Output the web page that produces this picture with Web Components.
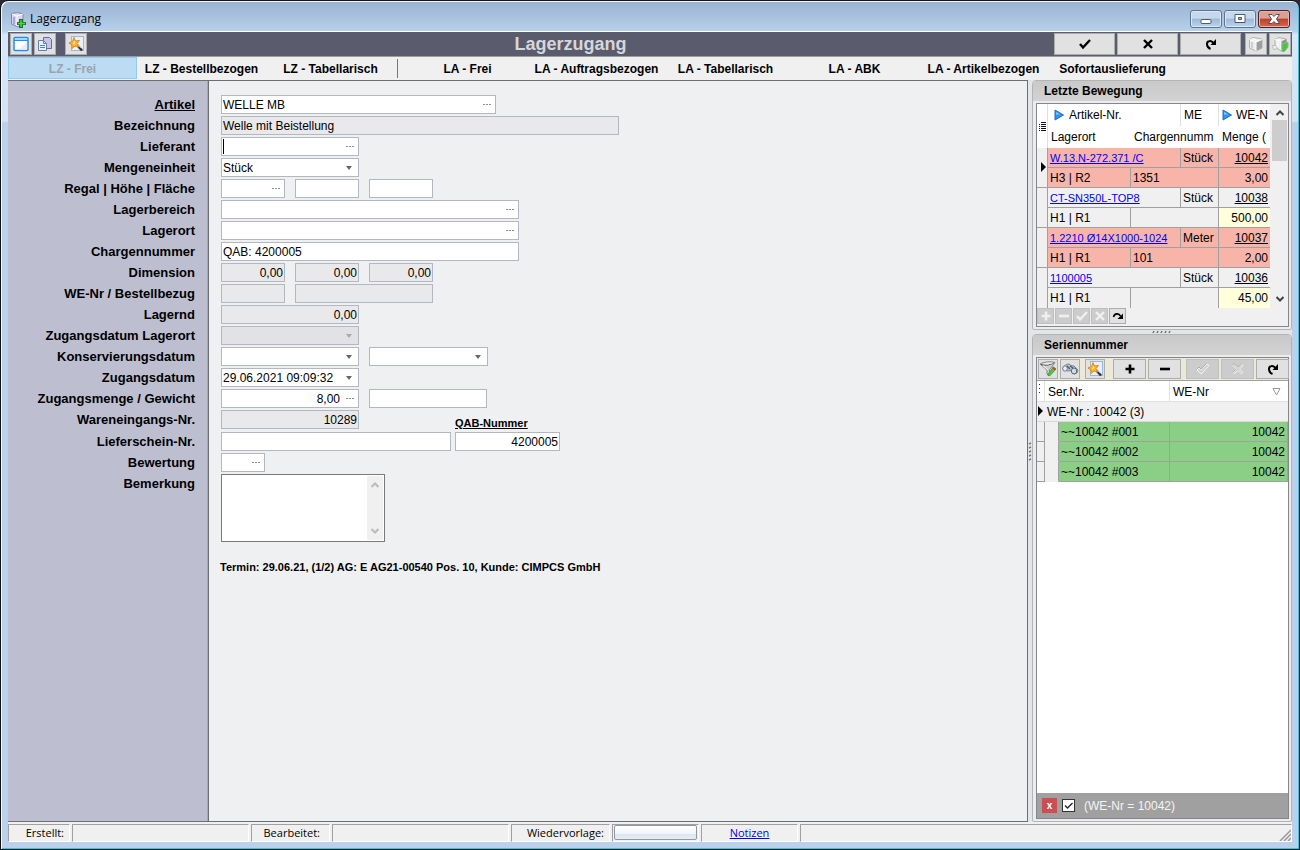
<!DOCTYPE html>
<html lang="de">
<head>
<meta charset="utf-8">
<title>Lagerzugang</title>
<style>
html, body { margin: 0; height: 100%; }
body { font: 12px/16px "Liberation Sans", Arial, sans-serif; color: #000; background: #2b2a30; }
</style>
</head>
<body>
<app-window caption="Lagerzugang">
  <tool-bar slot="top" caption="Lagerzugang"></tool-bar>
  <mode-tabs slot="top"></mode-tabs>
  <stock-form></stock-form>
  <side-column></side-column>
  <status-line slot="bottom"></status-line>
</app-window>
<script>
const ICONS = {
  box: [16, 17, '<path d="M1.500 2.500l6-1 5.500 1.500v10l-5 3-6.500-3z" fill="#d9d7f0" stroke="#8484b0"/><path d="M2 3l5 2v10M7 5l6-2" fill="none" stroke="#fff"/><path d="M4 6v7" stroke="#a9a5da" stroke-width="2"/><path d="M9 8h4v3h3v3h-3v3h-4v-3H7v-3h2z" fill="#167a1d"/><path d="M11 9v7M8 12.500h7" stroke="#4dd24d" stroke-width="1.500"/>'],
  window: [16, 16, '<rect x="1" y="1.500" width="14" height="13" rx="1" fill="#fff" stroke="#1e90f0" stroke-width="1.500"/><path d="M2 2h12v2H2z" fill="#9fd7ff"/><path d="M1 4.500h14" stroke="#1e90f0"/><path d="M6 13.500l8-8v8z" fill="#eceafb"/>'],
  pages: [16, 16, '<path d="M6.500 1.500h6l2 2v9h-8z" fill="#c9c4e8" stroke="#6e64a4"/><path d="M1.500 4.500h5l3 3v7h-8z" fill="#e6f1fb" stroke="#6382a8"/><path d="M6.500 4.500v3h3M3 9.500h5M3 11.500h5" fill="none" stroke="#6382a8"/>'],
  wand: [16, 16, '<rect x="3.500" y=".5" width="12" height="14" fill="#e8f0fc" stroke="#9db6dc"/><path d="M9 9l5 5.500" stroke="#333" stroke-width="2.500"/><path d="M10 9l3 3" stroke="#aaa"/><path d="M6 1.500L7.500 5l4-.5L9 7.500l1.500 3.500-3.500-1-3 2.500V9L1 7l3.500-1.500z" fill="#ffb52e" stroke="#e08a1c"/><path d="M6 5l.8 2L5 8" stroke="#fff2a8" fill="none"/>'],
  check: [14, 12, '<path d="M2 6l3 3.500L12 2" fill="none" stroke="currentColor" stroke-width="2.400"/>'],
  cross: [12, 12, '<path d="M2 2l8 8M10 2l-8 8" stroke="currentColor" stroke-width="2.400"/>'],
  redo: [12, 12, '<path d="M5.500 11C1 9 1 3.500 4.500 3 6.500 2.600 7.500 3.500 8.500 5" fill="none" stroke="currentColor" stroke-width="2"/><path d="M11 1v6H5.500z" fill="currentColor"/>'],
  curve: [12, 10, '<path d="M1.500 6C2.500 2 7 2 8.500 5" fill="none" stroke="currentColor" stroke-width="1.600"/><path d="M11 2.500V8H5.500z" fill="currentColor"/>'],
  plus: [12, 12, '<path d="M6 1.500v9M1.500 6h9" stroke="currentColor" stroke-width="2.600"/>'],
  minus: [12, 12, '<path d="M1 6h10" stroke="currentColor" stroke-width="2.600"/>'],
  checkOff: [14, 12, '<path d="M1 7l2-2 2.200 2.300L11 1l2 1.500L5.200 11z" fill="#cfcfcf" stroke="#f6f6f6"/><path d="M.5 6.500L3 4l2 2.200L10.500 .5" fill="none" stroke="#a4a4a4" stroke-width=".8"/>'],
  crossOff: [12, 12, '<path d="M1 2.500L2.500 1 6 4.500 9.500 1 11 2.500 7.500 6 11 9.500 9.500 11 6 7.500 2.500 11 1 9.500 4.500 6z" fill="#cfcfcf" stroke="#f2f2f2"/><path d="M.5 2L2 .5 6 4 9.500 .5M.5 9.500L4 6" fill="none" stroke="#a8a8a8" stroke-width=".8"/>'],
  cube: [16, 16, '<path d="M1.500 3.500L5 1.500l9 1.500v9l-6 3-6.500-3z" fill="#ececec" stroke="#b4b4b4"/><path d="M8 6l6-2.500V12l-6 3z" fill="#9b9fa0"/><path d="M1.500 3.500L8 6v9M8 6l6-2.500M4 2.500L10.500 5" fill="none" stroke="#fff"/><path d="M4 6v6" stroke="#c8c8c8" stroke-width="1.500"/>'],
  cubeGo: [17, 16, '<path d="M3 3.500L7 1.500l7 1.500v9l-5 3-6-4z" fill="#ececec" stroke="#b0b0b0"/><path d="M9 5.500l5.500-2.500v7L9 13z" fill="#8f9394"/><path d="M3 3.500l6 2V13M6 2.500v9" fill="none" stroke="#fff"/><path d="M.5 9.500h3l2 3-4 1z" fill="#f4f4f4" stroke="#bbb"/><path d="M10 8l6-1.500v4.500l-3.500 4.500H10z" fill="#4ec43e" stroke="#86b886"/>'],
  funnel: [18, 16, '<path d="M1 3c3-2 11-3 15-1.500L10.500 9v5L8 13V9z" fill="#ccc" stroke="#888"/><path d="M2 3.500c4 1.500 9 .5 13-1.500" stroke="#555" fill="none"/><path d="M3 3c3-1.500 8-1.500 12-1l-6 1.500z" fill="#efefef"/><path d="M4 4.500l5 4.500" stroke="#fff" fill="none"/><path d="M8.500 14l6-8L17 8l-6.500 7z" fill="#54c748" stroke="#3c9c36"/><path d="M13.500 6.500l2.500 2" stroke="#e43f32" stroke-width="2"/>'],
  binoc: [18, 14, '<path d="M1.500 6L5 2.500l3-.5 2 1.500L13 4l4 4-1 3-3 1-3-3.500-3 .5-4-1z" fill="#b8c5d2" stroke="#7a8793"/><ellipse cx="4" cy="6.500" rx="2.300" ry="2.700" fill="#e6eef6" stroke="#6f7c88"/><ellipse cx="13" cy="9" rx="2.700" ry="3" fill="#cfdcea" stroke="#5b6874"/><path d="M6 4l3 3M9 4l3 2" stroke="#4f5a65" stroke-width="1.300"/>'],
  play: [10, 12, '<path d="M1 1l8.500 5L1 11z" fill="#2e94f0" stroke="#1b6dc4"/><path d="M2 3l4 2.500H2z" fill="#8ccbff"/>'],
  here: [5, 10, '<path d="M0 0l5 5-5 5z" fill="#000"/>'],
  list: [8, 10, '<path d="M0 2.500h1M0 4.500h1M0 6.500h1M0 8.500h1M2 2.500h5M2 4.500h5M2 6.500h5M2 8.500h5M2 .5h5" stroke="#111"/>'],
  dotsV: [3, 12, '<path d="M1 1h1v1H1zM1 5h1v1H1zM1 9h1v1H1z" fill="#333"/>'],
  dots: [8, 2, '<path d="M0 0h2v1H0zM3 0h2v1H3zM6 0h2v1H6z" fill="#909090"/>'],
  drop: [7, 4, '<path d="M0 0h6L3 4z" fill="#666"/>'],
  dropOff: [7, 4, '<path d="M0 0h6L3 4z" fill="#aaa"/>'],
  sort: [9, 8, '<path d="M1 .5h7L4.500 7z" fill="#fff" stroke="#999"/>'],
  up: [8, 6, '<path d="M.5 5L4 1.500 7.500 5" fill="none" stroke="currentColor" stroke-width="2"/>'],
  down: [8, 6, '<path d="M.5 1L4 4.500 7.500 1" fill="none" stroke="currentColor" stroke-width="2"/>'],
  min: [12, 12, '<rect x="1" y="6.500" width="10" height="4" rx="1" fill="#fff" stroke="#4b5a6c"/>'],
  max: [12, 12, '<path d="M1 1.500h10v8H1z" fill="#fff" stroke="#4b5a6c"/><path d="M4.500 4.500h3v2h-3z" fill="#9db8d6" stroke="#4b5a6c"/>'],
  close: [14, 12, '<path d="M1.500 1.500H5l2 2 2-2h3.500L9.500 6l3 4.500H9l-2-2-2 2H1.500l3-4.500z" fill="#fff" stroke="#5e4a58"/>'],
  grip: [12, 12, '<path d="M1 12L12 1M5 12l7-7M9 12l3-3" stroke="#999" stroke-width="1.500"/>'],
  gripH: [20, 4, '<path d="M1 3l1-2M5 3l1-2M9 3l1-2M13 3l1-2M17 3l1-2" stroke="#777" stroke-width="1.600"/>'],
  gripV: [4, 20, '<path d="M1 3l2-1M1 7l2-1M1 11l2-1M1 15l2-1M1 19l2-1" stroke="#777" stroke-width="1.600"/>']
};
class Base extends HTMLElement {
  constructor() { super(); this.attachShadow({ mode: "open" }); }
  connectedCallback() { this.shadowRoot.innerHTML = this.view(); }
}
const icon = n => `<ui-icon name="${n}"></ui-icon>`;

customElements.define("ui-icon", class extends Base {
  view() {
    const [w, h, body] = ICONS[this.getAttribute("name")];
    return `<style>:host{display:inline-flex;flex:none}svg{display:block}</style>
      <svg width="${w}" height="${h}" viewBox="0 0 ${w} ${h}" aria-hidden="true">${body}</svg>`;
  }
});

customElements.define("tool-button", class extends Base {
  view() {
    const off = this.hasAttribute("disabled");
    return `<style>
      :host{display:block;flex:none;width:var(--w,22px);height:var(--h,22px)}
      button{display:flex;align-items:center;justify-content:center;box-sizing:border-box;width:100%;height:100%;margin:0;padding:0;
        border:1px solid #adadad;background:#e1e1e1;color:#000}
      button:disabled{background:#ccc;border-color:#bfbfbf;color:var(--off,#f0f0f0)}
      </style><button type="button" aria-label="${this.getAttribute("label")}" ${off ? "disabled" : ""}>${icon(this.getAttribute("icon"))}</button>`;
  }
});
const tb = (i, l, off) => `<tool-button icon="${i}" label="${l}" ${off ? "disabled" : ""}></tool-button>`;

customElements.define("app-window", class extends Base {
  view() {
    return `<style>
      :host{display:flex;flex-direction:column;box-sizing:border-box;min-height:100vh;border:1px solid #101418;border-radius:8px 8px 0 0;
        padding:0 7px 7px;background:linear-gradient(#98b2d1,#b7d0ea 30px,#d9e8f7 34px,#d3e3f4 120px,#b9d1ea 122px);
        box-shadow:inset 1px 1px #f4f8fc,inset -1px -1px #2cc8e8}
      header{display:flex;align-items:center;height:30px;box-sizing:border-box;padding:6px 2px 0;gap:4px;font:12px/16px "Open Sans","Noto Sans",sans-serif}
      h1{flex:1;margin:0;font:inherit}
      .ctl{display:flex;gap:2px}
      .ctl button{display:flex;align-items:center;justify-content:center;box-sizing:border-box;width:32px;height:18px;padding:0;border:1px solid #5b7591;border-radius:3px;
        background:linear-gradient(#c6d8ec 45%,#9db9d8 50%,#bcd3ec);box-shadow:inset 0 0 0 1px #dbe7f4}
      .ctl .x{border-color:#561d22;background:linear-gradient(#dba092 45%,#bd3f2c 50%,#cf6b50);box-shadow:inset 0 0 0 1px #e8b3a6}
      .client{flex:1;display:flex;flex-direction:column;background:#f0f0f0;border-top:1px solid #fff}
      main{flex:1;display:flex}
      </style>
      <header>${icon("box")}<h1>${this.getAttribute("caption")}</h1>
      <div class="ctl"><button aria-label="Minimieren">${icon("min")}</button><button aria-label="Maximieren">${icon("max")}</button><button class="x" aria-label="Schließen">${icon("close")}</button></div></header>
      <div class="client"><slot name="top"></slot><main><slot></slot></main><slot name="bottom"></slot></div>`;
  }
});

customElements.define("tool-bar", class extends Base {
  view() {
    return `<style>
      :host{display:flex;align-items:center;height:24px;padding:0 1px 0 2px;background:#5a5c6d;border-bottom:1px solid #9c9c9c}
      div{display:flex;gap:2px}
      .gap{margin-left:9px}
      .wide{--w:61px}
      h2{flex:1;margin:0;text-align:center;font:bold 18px/22px "Liberation Sans",Arial,sans-serif;color:#d6d6da}
      .end{margin-left:4px}
      </style>
      <div>${tb("window", "Fenster")}${tb("pages", "Kopieren")}</div><div class="gap">${tb("wand", "Assistent")}</div>
      <h2>${this.getAttribute("caption")}</h2>
      <div class="wide">${tb("check", "Speichern")}${tb("cross", "Abbrechen")}${tb("redo", "Aktualisieren")}</div>
      <div class="end">${tb("cube", "Lager")}${tb("cubeGo", "Lager buchen")}</div>`;
  }
});

customElements.define("mode-tabs", class extends Base {
  view() {
    const t = n => `<button type="button">${n}</button>`;
    return `<style>
      :host{display:block}
      nav{display:flex;height:23px}
      button{flex:0 1 129px;min-width:0;padding:2px 0 0;border:1px solid transparent;background:none;color:#000;white-space:nowrap;
        font:bold 12px/18px "Liberation Sans",Arial,sans-serif;margin-bottom:1px}
      button:disabled{background:#bcdcf4;border-color:#92caf6;color:#9aa3ab}
      i{flex:none;width:1px;margin:2px 5px 2px 2px;background:#777}
      </style><nav><button type="button" disabled>LZ - Frei</button>${["LZ - Bestellbezogen", "LZ - Tabellarisch"].map(t).join("")}<i></i>${
      ["LA - Frei", "LA - Auftragsbezogen", "LA - Tabellarisch", "LA - ABK", "LA - Artikelbezogen", "Sofortauslieferung"].map(t).join("")}</nav>`;
  }
});

/* One entry per line of the form: label, then its fields (width, kind, value, flags). */
const ROWS = [
  ["Artikel", [[275, "dots", "WELLE MB"]], "link"],
  ["Bezeichnung", [[398, "", "Welle mit Beistellung", "ro"]]],
  ["Lieferant", [[138, "dots", "", "focus"]]],
  ["Mengeneinheit", [[138, "select", "Stück"]]],
  ["Regal | Höhe | Fläche", [[64, "dots", ""], [64, "", ""], [64, "", ""]]],
  ["Lagerbereich", [[298, "dots", ""]]],
  ["Lagerort", [[298, "dots", ""]]],
  ["Chargennummer", [[298, "", "QAB: 4200005"]]],
  ["Dimension", [[64, "", "0,00", "ro num"], [64, "", "0,00", "ro num"], [64, "", "0,00", "ro num"]]],
  ["WE-Nr / Bestellbezug", [[64, "", "", "ro"], [138, "", "", "ro"]]],
  ["Lagernd", [[138, "", "0,00", "ro num"]]],
  ["Zugangsdatum Lagerort", [[138, "dropOff", "", "off"]]],
  ["Konservierungsdatum", [[138, "drop", ""], [119, "drop", ""]]],
  ["Zugangsdatum", [[138, "drop", "29.06.2021 09:09:32"]]],
  ["Zugangsmenge / Gewicht", [[138, "dots", "8,00", "num"], [118, "", ""]]]
];
customElements.define("stock-form", class extends Base {
  field(id, name, [w, kind, value, flags = ""]) {
    const ro = /ro|off/.test(flags);
    const ctl = kind === "select"
      ? `<select id="${id}"><option>${value}</option></select><span class="arrow">${icon("drop")}</span>`
      : `<input id="${id}" type="text" value="${value}" aria-label="${name}" ${ro ? "readonly" : ""}>` +
        (kind ? `<button type="button" aria-label="${name} auswählen" ${flags === "off" ? "disabled" : ""}>${icon(kind)}</button>` : "");
    return `<span class="f ${flags}" style="width:${w}px">${ctl}</span>`;
  }
  row(n, [name, fields, cls = ""]) {
    return `<div class="row"><label for="r${n}_0" class="${cls}">${name}</label>${fields.map((f, i) => this.field(`r${n}_${i}`, name, f)).join("")}</div>`;
  }
  view() {
    return `<style>
      :host{flex:1;min-width:0;display:flex;flex-direction:column;box-sizing:border-box;gap:2px;margin:0 0 2px;padding:14px 0 0;
        border:solid #6d6e73;border-width:1px 1px 1px 0;
        background:linear-gradient(90deg,#bdbfd0 199px,#a5a7b6 199px 200px,#6d6e73 200px 201px,#eff0f2 201px)}
      .row{display:flex;gap:10px;min-height:19px}
      .row.tight{gap:4px}
      label{font:bold 13px/19px "Liberation Sans",Arial,sans-serif}
      .row>label:first-child{flex:none;width:187px;margin-right:16px;text-align:right;white-space:nowrap}
      .row.tight>label:first-child{margin-right:22px}
      .link{text-decoration:underline}
      .f{display:flex;flex:none;box-sizing:border-box;height:19px;border:1px solid #b3b8c0;background:#fff}
      .focus::before{content:"";width:1px;margin:1px 0 1px 1px;background:#000}
      .ro{background:#e9e9eb}.off{background:#e1e1e6}
      input,select{flex:1;min-width:0;width:0;margin:0;padding:1px 1px 0;border:0;outline:0;background:none;appearance:none;color:#000;caret-color:transparent;
        font:12px/16px "Liberation Sans",Arial,sans-serif}
      .num input{text-align:right}
      .f button,.arrow{display:flex;flex:none;width:17px;padding:0;border:0;background:none;align-items:center;justify-content:center}
      .lead{flex:none;width:230px;height:20px}
      .row .qab{font:bold 11px/13px "Liberation Sans",Arial,sans-serif;text-decoration:underline;align-self:flex-end}
      .memo{display:flex;box-sizing:border-box;width:164px;height:68px;border:1px solid #7a7a7a;background:#fff;padding:1px}
      textarea{flex:1;min-width:0;border:0;outline:0;padding:1px;resize:none;font:12px/16px "Liberation Sans",Arial,sans-serif}
      .bar{display:flex;flex-direction:column;justify-content:space-between;align-items:center;width:16px;padding:6px 0;box-sizing:border-box;background:#f0f0f0;color:#bbb}
      p{margin:15px 0 0 212px;font:bold 11px/16px "Liberation Sans",Arial,sans-serif}
      </style>
      ${ROWS.map((r, i) => this.row(i, r)).join("")}
      <div class="row tight"><label for="we">Wareneingangs-Nr.</label><span class="lead">${this.field("we", "Wareneingangs-Nr.", [138, "", "10289", "ro num"])}</span><label class="qab" for="qab">QAB-Nummer</label></div>
      <div class="row tight"><label for="ls">Lieferschein-Nr.</label>${this.field("ls", "Lieferschein-Nr.", [230, "", ""])}${this.field("qab", "QAB-Nummer", [105, "", "4200005", "num"])}</div>
      ${this.row(90, ["Bewertung", [[44, "dots", ""]]])}
      <div class="row"><label for="memo">Bemerkung</label><div class="memo"><textarea id="memo"></textarea><span class="bar">${icon("up")}${icon("down")}</span></div></div>
      <p>Termin: 29.06.21, (1/2) AG: E AG21-00540 Pos. 10, Kunde: CIMPCS GmbH</p>`;
  }
});

customElements.define("group-panel", class extends Base {
  view() {
    return `<style>
      :host{display:flex;flex-direction:column;box-sizing:border-box;border:1px solid #b4b4b4;border-radius:4px 4px 2px 2px;background:#ececec;padding:0 2px 2px 3px}
      h3{margin:0 -2px 2px -3px;padding:0 11px;background:linear-gradient(#c9c9c9,#d3d3d3);font:bold 12px/20px "Liberation Sans",Arial,sans-serif;border-radius:3px 3px 0 0}
      .box{flex:1;display:flex;flex-direction:column;border:1px solid #85858f;background:#f0f0f0}
      </style><h3>${this.getAttribute("caption")}</h3><div class="box"><slot></slot></div>`;
  }
});

customElements.define("side-column", class extends Base {
  view() {
    return `<style>
      :host{flex:none;width:264px;display:flex;margin-bottom:2px;background:#e4e5e9}
      .v{width:4px;display:flex;align-items:center}
      .col{flex:1;min-width:0;display:flex;flex-direction:column}
      .h{height:4px;display:flex;justify-content:center;align-items:center}
      .fill{flex:1}
      </style><div class="v">${icon("gripV")}</div><div class="col">
      <group-panel caption="Letzte Bewegung"><movement-grid></movement-grid></group-panel>
      <div class="h">${icon("gripH")}</div>
      <group-panel class="fill" caption="Seriennummer"><serial-grid></serial-grid></group-panel></div>`;
  }
});

const MOVES = [
  ["W.13.N-272.371 /C", "Stück", "10042", "H3 | R2", "1351", "3,00", "hot"],
  ["CT-SN350L-TOP8", "Stück", "10038", "H1 | R1", "", "500,00", ""],
  ["1.2210 Ø14X1000-1024", "Meter", "10037", "H1 | R1", "101", "2,00", "hot"],
  ["1100005", "Stück", "10036", "H1 | R1", "", "45,00", ""]
];
customElements.define("movement-grid", class extends Base {
  view() {
    return `<style>
      :host{display:block}
      .view{display:flex}
      table{flex:none;width:233px;table-layout:fixed;border-collapse:separate;border-spacing:0;background:#f0f0f0}
      td,th{box-sizing:border-box;height:20px;padding:0 2px;font:12px/18px "Liberation Sans",Arial,sans-serif;white-space:nowrap;overflow:hidden;text-align:left;
        border:solid #a0a0a0;border-width:0 1px 1px 0}
      th{height:22px;background:#fff;border-color:#e0e0e0;border-bottom:0;padding:0 3px}
      thead tr:last-child th{border-right-color:#fff}
      thead th:last-child{border-right:0;padding-right:0}
      th ui-icon{margin:0 5px 0 3px;vertical-align:-2px}
      th:last-child ui-icon{margin:0 4px 0 0}
      .ind{padding:0 0 0 4px}
      th.ind{padding:0 0 0 2px}
      th.ind ui-icon{margin:0}
      td:last-child{border-right:0}
      .hot td{background:#f8b4a8}
      .hot .ind{background:#f0f0f0}
      tbody tr:last-child td,tbody tr:nth-last-child(2) .ind{border-bottom:0}
      .num{text-align:right}
      tr .menge{background:#ffffdc}
      .hot .menge{background:#f8b4a8}
      a{color:#00f;font-size:11px}
      .num a{color:#000;font-size:12px}
      .bar{flex:1;display:flex;flex-direction:column;align-items:center;background:#f0f0f0;color:#444;padding:6px 0;margin-left:1px}
      .thumb{width:15px;height:41px;margin:4px 0 auto;background:#cdcdcd}
      .nav{display:flex;gap:1px;padding:0 0 2px;--w:17px;--h:16px}
      </style>
      <div class="view"><table><colgroup><col style="width:11px"><col style="width:83px"><col style="width:50px"><col style="width:38px"><col style="width:51px"></colgroup>
      <thead><tr><th class="ind" rowspan="2">${icon("list")}</th><th colspan="2">${icon("play")}Artikel-Nr.</th><th>ME</th><th>${icon("play")}WE-N</th></tr>
      <tr><th>Lagerort</th><th colspan="2">Chargennumm</th><th>Menge (</th></tr></thead>
      <tbody>${MOVES.map((m, i) => `<tr class="${m[6]}"><td class="ind" rowspan="2">${i ? "" : icon("here")}</td><td colspan="2"><a href="#">${m[0]}</a></td><td>${m[1]}</td><td class="num"><a href="#">${m[2]}</a></td></tr>
      <tr class="${m[6]}"><td>${m[3]}</td><td colspan="2">${m[4]}</td><td class="num menge">${m[5]}</td></tr>`).join("")}</tbody></table>
      <div class="bar">${icon("up")}<span class="thumb"></span>${icon("down")}</div></div>
      <div class="nav">${tb("plus", "Neu", 1)}${tb("minus", "Löschen", 1)}${tb("check", "Übernehmen", 1)}${tb("cross", "Verwerfen", 1)}${tb("curve", "Aktualisieren")}</div>`;
  }
});

customElements.define("serial-grid", class extends Base {
  view() {
    const row = n => `<tr class="ok"><td class="ind"></td><td class="pad"></td><td>~~10042 #${n}</td><td class="num">10042</td></tr>`;
    return `<style>
      :host{flex:1;display:flex;flex-direction:column;background:#fff}
      .tools{display:flex;gap:2px;height:23px;padding:1px 1px 0;background:#ece9d8;--w:20px;--h:20px;border-bottom:1px solid #a0a0a0;box-sizing:border-box}
      .tools tool-button:nth-child(3){margin-left:3px}
      .edit{flex:1;display:flex;gap:2px;margin-left:6px;--w:33px}
      table{width:100%;table-layout:fixed;border-collapse:separate;border-spacing:0}
      td,th{box-sizing:border-box;height:20px;padding:0 2px;font:12px/18px "Liberation Sans",Arial,sans-serif;white-space:nowrap;text-align:left;
        border:solid #a0a0a0;border-width:0 1px 1px 0}
      th{height:21px;border-color:#e0e0e0;padding:1px 3px 0}
      th:last-child,.grp td{border-right:0}
      .grp td{background:#f0f0f0;border-color:#d8d8d8;padding:0 2px}
      .ok td{background:#8acf85}
      .ok .ind,.ok .pad{background:#f0f0f0}
      .ok .pad{border-bottom-color:#f0f0f0}
      td.ind,th.ind,.grp .ind{padding:0 0 0 1px}
      .num{text-align:right}
      .head{display:flex;justify-content:space-between;align-items:center;padding-right:4px}
      footer{display:flex;align-items:center;gap:5px;margin-top:auto;height:25px;padding:0 5px;background:#a0a0a0;color:#fff}
      footer button{width:15px;height:15px;padding:0;border:0;background:#c94f53;color:#fff;font:bold 10px/13px "Liberation Sans",Arial,sans-serif}
      input{appearance:none;width:13px;height:13px;box-sizing:border-box;margin:0;border:1px solid #333;background:#fff}
      .tick{display:grid}
      .tick>*{grid-area:1/1}
      .tick svg{pointer-events:none}
      label{margin-left:4px;color:#f4f4f4}
      </style>
      <div class="tools">${tb("funnel", "Filter")}${tb("binoc", "Suchen")}${tb("wand", "Assistent")}<div class="edit">${tb("plus", "Neu")}${tb("minus", "Löschen")}${tb("checkOff", "Übernehmen", 1)}${tb("crossOff", "Verwerfen", 1)}${tb("redo", "Aktualisieren")}</div></div>
      <table><colgroup><col style="width:8px"><col style="width:14px"><col style="width:111px"><col></colgroup>
      <thead><tr><th class="ind">${icon("dotsV")}</th><th colspan="2">Ser.Nr.</th><th><span class="head">WE-Nr${icon("sort")}</span></th></tr></thead>
      <tbody><tr class="grp"><td class="ind">${icon("here")}</td><td colspan="3">WE-Nr : 10042 (3)</td></tr>${["001", "002", "003"].map(row).join("")}</tbody></table>
      <footer><button type="button" aria-label="Filter entfernen">x</button><span class="tick"><input id="flt" type="checkbox" checked><svg width="13" height="13" aria-hidden="true"><path d="M3 6.500L5.500 9 10.500 4" fill="none" stroke="#222" stroke-width="1.300"/></svg></span><label for="flt">(WE-Nr = 10042)</label></footer>`;
  }
});

customElements.define("status-line", class extends Base {
  view() {
    return `<style>
      :host{display:flex;gap:2px;height:18px;font:11px/16px "Open Sans","Noto Sans",sans-serif}
      span{box-sizing:border-box;flex:none;border:1px solid;border-color:#a0a0a0 #fff #fff #a0a0a0;text-align:right;padding:0 5px;white-space:nowrap}
      .s{width:62px}.m{width:177px}.b{width:79px;padding-right:9px}.w{width:99px}.p{width:87px;padding:0 1px}.n{width:97px;text-align:center}
      .r{flex:1;display:flex;justify-content:flex-end;align-items:flex-end;padding:0}
      button{display:block;box-sizing:border-box;width:100%;height:15px;padding:0;border:1px solid #8e97a6;border-radius:2px;background:linear-gradient(#fff,#f1f4f9 60%,#dde5ee 65%,#e6ecf3)}
      a{color:#00f}
      </style><span class="s">Erstellt:</span><span class="m"></span><span class="b">Bearbeitet:</span><span class="m"></span><span class="w">Wiedervorlage:</span>
      <span class="p"><button type="button" aria-label="Wiedervorlage"></button></span><span class="n"><a href="#">Notizen</a></span><span class="r">${icon("grip")}</span>`;
  }
});
</script>
</body>
</html>
